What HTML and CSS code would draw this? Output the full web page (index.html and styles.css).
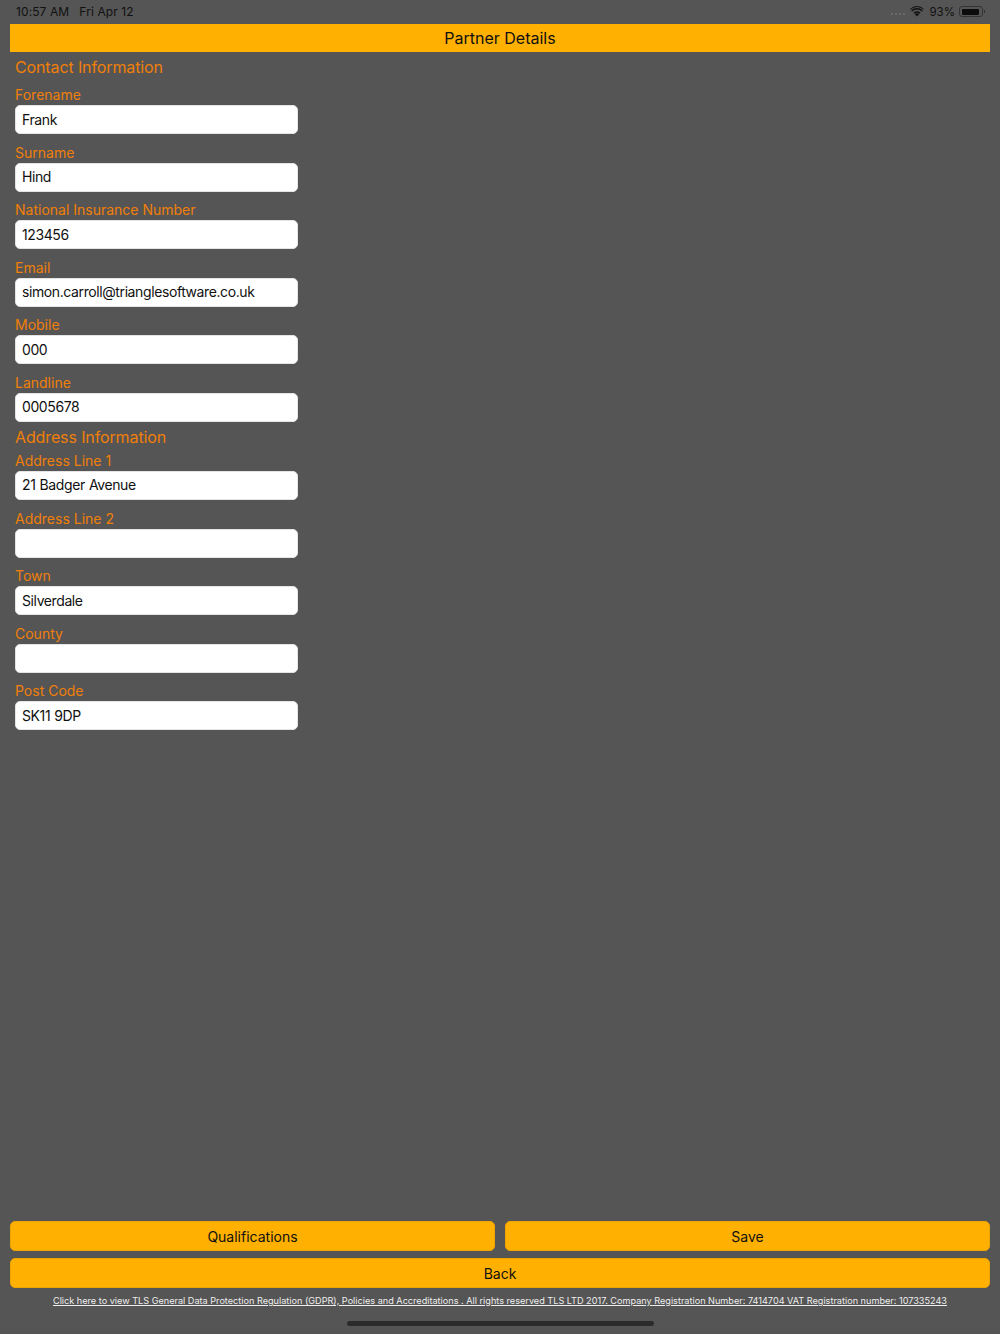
FILE: index.html
```html
<!DOCTYPE html>
<html lang="en">
<head>
  <meta charset="UTF-8" />
  <meta name="viewport" content="width=device-width, initial-scale=1.0" />
  <title>Partner Details</title>
  <link rel="stylesheet" href="styles.css">
</head>
<body>
  <div class="app-container">
    <div class="status-bar">
      <div class="status-left">
        <span>10:57 AM</span>
        <span>Fri Apr 12</span>
      </div>
      <div class="status-right">
        <span class="signal"><i></i><i></i><i></i><i></i></span>
        <svg class="wifi" width="14" height="11" viewBox="0 0 14 11">
          <path d="M7 10.6 4.9 8.3a3 3 0 0 1 4.2 0z" fill="#111"/>
          <path d="M3.4 6.8a5.2 5.2 0 0 1 7.2 0l-1 1.05a3.8 3.8 0 0 0-5.2 0z" fill="#111"/>
          <path d="M1.1 4.4a8.5 8.5 0 0 1 11.8 0l-1 1.05a7.1 7.1 0 0 0-9.8 0z" fill="#111"/>
          <path d="M0 2.9a10.2 10.2 0 0 1 14 0l-.6.7a9.3 9.3 0 0 0-12.8 0z" fill="#111"/>
        </svg>
        <span class="battery-pct">93%</span>
        <span class="battery"><span class="battery-level"></span></span>
      </div>
    </div>
    <header>Partner Details</header>
    <main>
      <h2 class="section-first">Contact Information</h2>
      <div class="field"><label>Forename</label><input type="text" value="Frank"></div>
      <div class="field"><label>Surname</label><input type="text" value="Hind"></div>
      <div class="field"><label>National Insurance Number</label><input type="text" value="123456"></div>
      <div class="field"><label>Email</label><input type="text" value="simon.carroll@trianglesoftware.co.uk"></div>
      <div class="field"><label>Mobile</label><input type="text" value="000"></div>
      <div class="field"><label>Landline</label><input type="text" value="0005678"></div>
      <h2>Address Information</h2>
      <div class="field"><label>Address Line 1</label><input type="text" value="21 Badger Avenue"></div>
      <div class="field"><label>Address Line 2</label><input type="text" value=""></div>
      <div class="field"><label>Town</label><input type="text" value="Silverdale"></div>
      <div class="field"><label>County</label><input type="text" value=""></div>
      <div class="field"><label>Post Code</label><input type="text" value="SK11 9DP"></div>
    </main>
    <div class="actions">
      <div class="button-row">
        <button>Qualifications</button>
        <button>Save</button>
      </div>
      <button>Back</button>
    </div>
    <a class="legal" href="#">Click here to view TLS General Data Protection Regulation (GDPR), Policies and Accreditations . All rights reserved TLS LTD 2017. Company Registration Number: 7414704 VAT Registration number: 107335243</a>
    <div class="home-indicator"></div>
  </div>
</body>
</html>
```

FILE: styles.css
```css
body {
  font-family: 'Inter', 'Liberation Sans', sans-serif;
  background-color: #555555;
  margin: 0;
}
.app-container {
  display: flex;
  flex-direction: column;
  height: 1334px;
  padding: 0 10px 8px;
  box-sizing: border-box;
}
.status-bar {
  display: flex;
  justify-content: space-between;
  align-items: center;
  height: 24px;
  padding: 0 4px 1px 6px;
  box-sizing: border-box;
  font-size: 12px;
  letter-spacing: 0.1px;
  color: #111;
}
.status-left {
  display: flex;
  gap: 10px;
}
.status-right {
  display: flex;
  align-items: center;
  gap: 5px;
  color: #111;
}
.battery-pct {
  font-size: 11.5px;
  letter-spacing: 0;
  margin-right: -1px;
}
.signal {
  display: flex;
  gap: 1.5px;
  margin-top: 5px;
}
.signal i {
  width: 2.5px;
  height: 2.5px;
  border-radius: 50%;
  background: #707070;
}
.battery {
  position: relative;
  display: block;
  width: 24px;
  height: 11px;
  padding: 1.5px;
  border: 1px solid #333;
  border-radius: 3px;
  box-sizing: border-box;
  margin-right: 3px;
}
.battery::after {
  content: "";
  position: absolute;
  right: -3px;
  top: 3px;
  width: 1.5px;
  height: 3px;
  background: #333;
}
.battery-level {
  display: block;
  width: 93%;
  height: 100%;
  background: #0c0c0c;
  border-radius: 1px;
}
header {
  background-color: #ffb000;
  color: #111;
  height: 28px;
  line-height: 28px;
  text-align: center;
  font-size: 16px;
}
main {
  flex: 1;
  padding: 0 5px;
}
h2 {
  margin: 5px 0 4px;
  font-size: 16px;
  font-weight: 400;
  line-height: 20px;
  letter-spacing: -0.12px;
  color: #f07f09;
}
.section-first {
  margin-bottom: 8px;
}
.field {
  width: 283px;
}
.field + .field {
  margin-top: 8.6px;
}
label {
  display: block;
  font-size: 14px;
  line-height: 20px;
  color: #f07f09;
}
input[type="text"] {
  display: block;
  width: 100%;
  height: 29px;
  padding: 0 6px 1px;
  border: 1px solid #e4e4e4;
  border-radius: 5px;
  background: #fff;
  color: #111;
  font-family: inherit;
  font-size: 14px;
  letter-spacing: -0.4px;
  word-spacing: 0.6px;
  box-sizing: border-box;
}
.actions {
  display: flex;
  flex-direction: column;
  gap: 7px;
}
.button-row {
  display: flex;
  gap: 10px;
}
.button-row button {
  flex: 1;
}
button {
  height: 30px;
  background-color: #ffb000;
  color: #111;
  border: 1px solid #eda400;
  border-radius: 5px;
  font-family: inherit;
  font-size: 14px;
  cursor: pointer;
}
.legal {
  display: block;
  margin-top: 6px;
  text-align: center;
  font-size: 9.14px;
  line-height: 13px;
  color: #eee;
}
.home-indicator {
  width: 307px;
  height: 5px;
  margin: 14px auto 0;
  border-radius: 3px;
  background: #2b2b2b;
}
```
